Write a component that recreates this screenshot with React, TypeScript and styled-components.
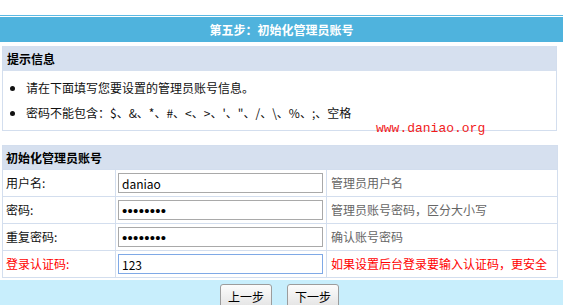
import React from 'react';
import styled, { createGlobalStyle } from 'styled-components';

const GlobalStyle = createGlobalStyle`
  html, body {
    margin: 0;
    padding: 0;
    background: #fff;
  }
  body {
    font-family: "Noto Sans CJK SC", "Noto Sans", sans-serif;
    font-size: 12px;
    color: #000;
  }
`;

const rows = [
  { label: '用户名:', type: 'text', value: 'daniao', tip: '管理员用户名' },
  { label: '密码:', type: 'password', value: '12345678', tip: '管理员账号密码，区分大小写' },
  { label: '重复密码:', type: 'password', value: '12345678', tip: '确认账号密码' },
  { label: '登录认证码:', type: 'text', value: '123', tip: '如果设置后台登录要输入认证码，更安全', warn: true },
];

const App = () => {
  return (
    <Page>
      <GlobalStyle />
      <StepBar>
        <StepTitle>第五步：初始化管理员账号</StepTitle>
      </StepBar>

      <Panel>
        <PanelHead>提示信息</PanelHead>
        <TipList>
          <li>请在下面填写您要设置的管理员账号信息。</li>
          <li>密码不能包含：$、&amp;、*、#、&lt;、&gt;、'、"、/、\、%、;、空格</li>
        </TipList>
      </Panel>

      <Watermark>www.daniao.org</Watermark>

      <FormTable>
        <colgroup>
          <Col $w={113} />
          <Col $w={211} />
          <Col $w={231} />
        </colgroup>
        <tbody>
          <tr>
            <HeadCell colSpan={3}>初始化管理员账号</HeadCell>
          </tr>
          {rows.map((r) => (
            <tr key={r.label}>
              <LabelCell $warn={r.warn}>{r.label}</LabelCell>
              <InputCell>
                <Field
                  type={r.type}
                  defaultValue={r.value}
                  $active={r.warn}
                  $secret={r.type === 'password'}
                  readOnly
                />
              </InputCell>
              <TipCell $warn={r.warn}>{r.tip}</TipCell>
            </tr>
          ))}
        </tbody>
      </FormTable>

      <Footer>
        <ButtonRow>
          <StepButton type="button">上一步</StepButton>
          <StepButton type="button">下一步</StepButton>
        </ButtonRow>
      </Footer>
    </Page>
  );
};

const Page = styled.div`
  position: relative;
  width: 563px;
  height: 305px;
  padding-top: 15px;
  box-sizing: border-box;
  overflow: hidden;
`;

const StepBar = styled.div`
  border-top: 1px solid #5cb9e2;
  padding-top: 1px;
`;

const StepTitle = styled.h2`
  margin: 0;
  height: 25px;
  line-height: 25px;
  background: #4fb3dd;
  color: #fff;
  font-size: 12px;
  font-weight: bold;
  text-align: center;
`;

const Panel = styled.div`
  width: 555px;
  margin: 4px 0 0 2px;
  box-sizing: border-box;
  border: 1px solid #d3deee;
  border-top: 0;
`;

const PanelHead = styled.div`
  height: 25px;
  line-height: 25px;
  padding-left: 4px;
  background: #d6e0ef;
  font-weight: bold;
`;

const TipList = styled.ul`
  margin: 0;
  padding: 4px 0 5px 23px;

  li {
    line-height: 25px;
    color: #111;
  }
`;

const Watermark = styled.div`
  position: absolute;
  left: 376px;
  top: 121px;
  font-family: "Liberation Mono", "DejaVu Sans Mono", monospace;
  font-size: 13px;
  line-height: 15px;
  color: #f21b1b;
`;

const FormTable = styled.table`
  width: 555px;
  margin: 14px 0 0 2px;
  border-collapse: collapse;
  table-layout: fixed;
  border: 1px solid #d3deee;
`;

const Col = styled.col<{ $w: number }>`
  width: ${(p) => p.$w}px;
`;

const HeadCell = styled.th`
  height: 23px;
  padding: 0 0 0 3px;
  background: #d6e0ef;
  text-align: left;
  font-weight: bold;
  line-height: 23px;
  border: 1px solid #d3deee;
`;

const Cell = styled.td`
  height: 26px;
  padding: 0;
  border: 1px solid #d3deee;
  line-height: 26px;
  white-space: nowrap;
`;

const LabelCell = styled(Cell)<{ $warn?: boolean }>`
  padding-left: 3px;
  color: ${(p) => (p.$warn ? '#f00' : '#111')};
`;

const InputCell = styled(Cell)`
  padding-left: 2px;
`;

const TipCell = styled(Cell)<{ $warn?: boolean }>`
  padding-left: 4px;
  color: ${(p) => (p.$warn ? '#f00' : '#666')};
`;

const Field = styled.input<{ $active?: boolean; $secret?: boolean }>`
  display: block;
  width: 205px;
  height: 20px;
  box-sizing: border-box;
  margin: 0;
  padding: 0 3px;
  border: 1px solid ${(p) => (p.$active ? '#7fa9e6' : '#a9a9a9')};
  font-family: ${(p) => (p.$secret ? '"Liberation Sans", Arial, sans-serif' : 'inherit')};
  font-size: ${(p) => (p.$secret ? '15px' : '12px')};
  letter-spacing: ${(p) => (p.$secret ? '0.3px' : 'normal')};
  color: #000;
  outline: none;
`;

const Footer = styled.div`
  margin-top: 2px;
  height: 40px;
  padding-top: 4px;
  box-sizing: border-box;
  background: #c8eefc;
`;

const ButtonRow = styled.div`
  width: 555px;
  margin-left: 2px;
  display: flex;
  justify-content: center;
  gap: 15px;
`;

const StepButton = styled.button`
  width: 52px;
  height: 24px;
  padding: 0;
  border: 1px solid #9c9c9c;
  border-radius: 3px;
  background: linear-gradient(#fcfcfc, #e4e4e4);
  font-family: inherit;
  font-size: 12px;
  color: #000;
`;

export default App;
